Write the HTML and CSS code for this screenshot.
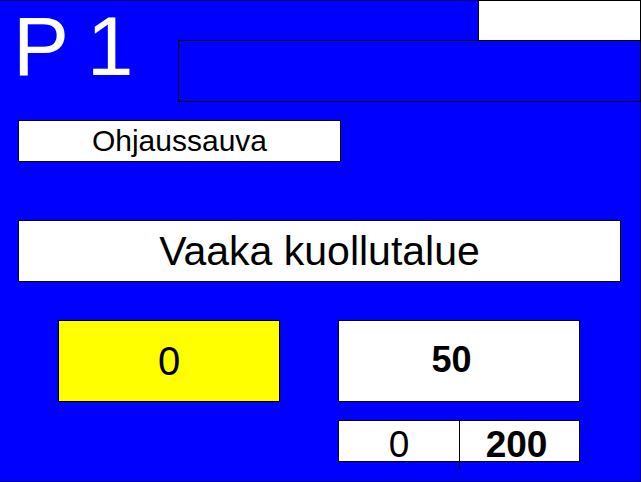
FILE: index.html
```html
<!DOCTYPE html>
<html lang="fi">
<head>
    <meta charset="UTF-8">
    <meta name="viewport" content="width=device-width, initial-scale=1.0">
    <title>P 1</title>
    <link rel="stylesheet" href="styles.css">
</head>
<body>
    <div class="screen">
        <div class="header">
            <div class="page-title">P 1</div>
            <div class="header-side">
                <div class="status-box"></div>
                <div class="alarm-box"></div>
            </div>
        </div>

        <div class="label-box">Ohjaussauva</div>
        <div class="title-box">Vaaka kuollutalue</div>

        <div class="values">
            <div class="value-box actual">0</div>
            <div class="value-box setpoint">50</div>
            <div class="limits">
                <div class="limit">0</div>
                <div class="limit max">200</div>
            </div>
        </div>
    </div>
</body>
</html>
```

FILE: styles.css
```css
/* Paneelin näkymä: sininen tausta, valkoiset kentät */
* {
    box-sizing: border-box;
}

body {
    margin: 0;
    font-family: 'Liberation Sans', Arial, sans-serif;
    color: #000;
}

.screen {
    width: 641px;
    height: 482px;
    background-color: #0000ff;
    box-shadow: inset -1px -1px 0 #00007a, inset 0 1px 0 #00007a;
    overflow: hidden;
}

/* === Yläosa === */
.header {
    display: flex;
    height: 102px;
}

.page-title {
    width: 178px;
    padding-left: 13px;
    font-size: 84px;
    line-height: 93px;
    letter-spacing: -2px;
    color: #fff;
    white-space: pre;
}

.header-side {
    flex: 1;
    display: flex;
    flex-direction: column;
}

.status-box {
    height: 41px;
    margin-left: 300px;
    background-color: #fff;
    border: 1px solid #000;
}

.alarm-box {
    height: 62px;
    margin-top: -1px;
    border: 1px solid #000;
}

/* === Otsikot === */
.label-box {
    width: 323px;
    height: 42px;
    margin: 18px 0 0 18px;
    background-color: #fff;
    border: 1px solid #000;
    font-size: 30px;
    line-height: 40px;
    text-align: center;
}

.title-box {
    width: 603px;
    height: 62px;
    margin: 58px 0 0 18px;
    background-color: #fff;
    border: 1px solid #000;
    font-size: 41px;
    line-height: 60px;
    text-align: center;
}

/* === Arvot === */
.values {
    display: grid;
    grid-template-columns: 222px 242px;
    grid-template-rows: 82px 42px;
    column-gap: 58px;
    row-gap: 18px;
    margin: 38px 0 0 58px;
}

.value-box {
    background-color: #fff;
    border: 1px solid #000;
    font-size: 40px;
    line-height: 80px;
    text-align: center;
}

.value-box.actual {
    background-color: #ffff00;
}

.value-box.setpoint {
    padding-right: 15px;
    font-size: 36px;
    font-weight: bold;
    line-height: 78px;
}

.limits {
    grid-column: 2;
    display: grid;
    grid-template-columns: 120px 1fr;
    background-color: #fff;
    border: 1px solid #000;
}

.limit {
    font-size: 37px;
    line-height: 48px;
    text-align: center;
}

.limit.max {
    padding-right: 6px;
    border-left: 1px solid #000;
    font-weight: bold;
}
```
